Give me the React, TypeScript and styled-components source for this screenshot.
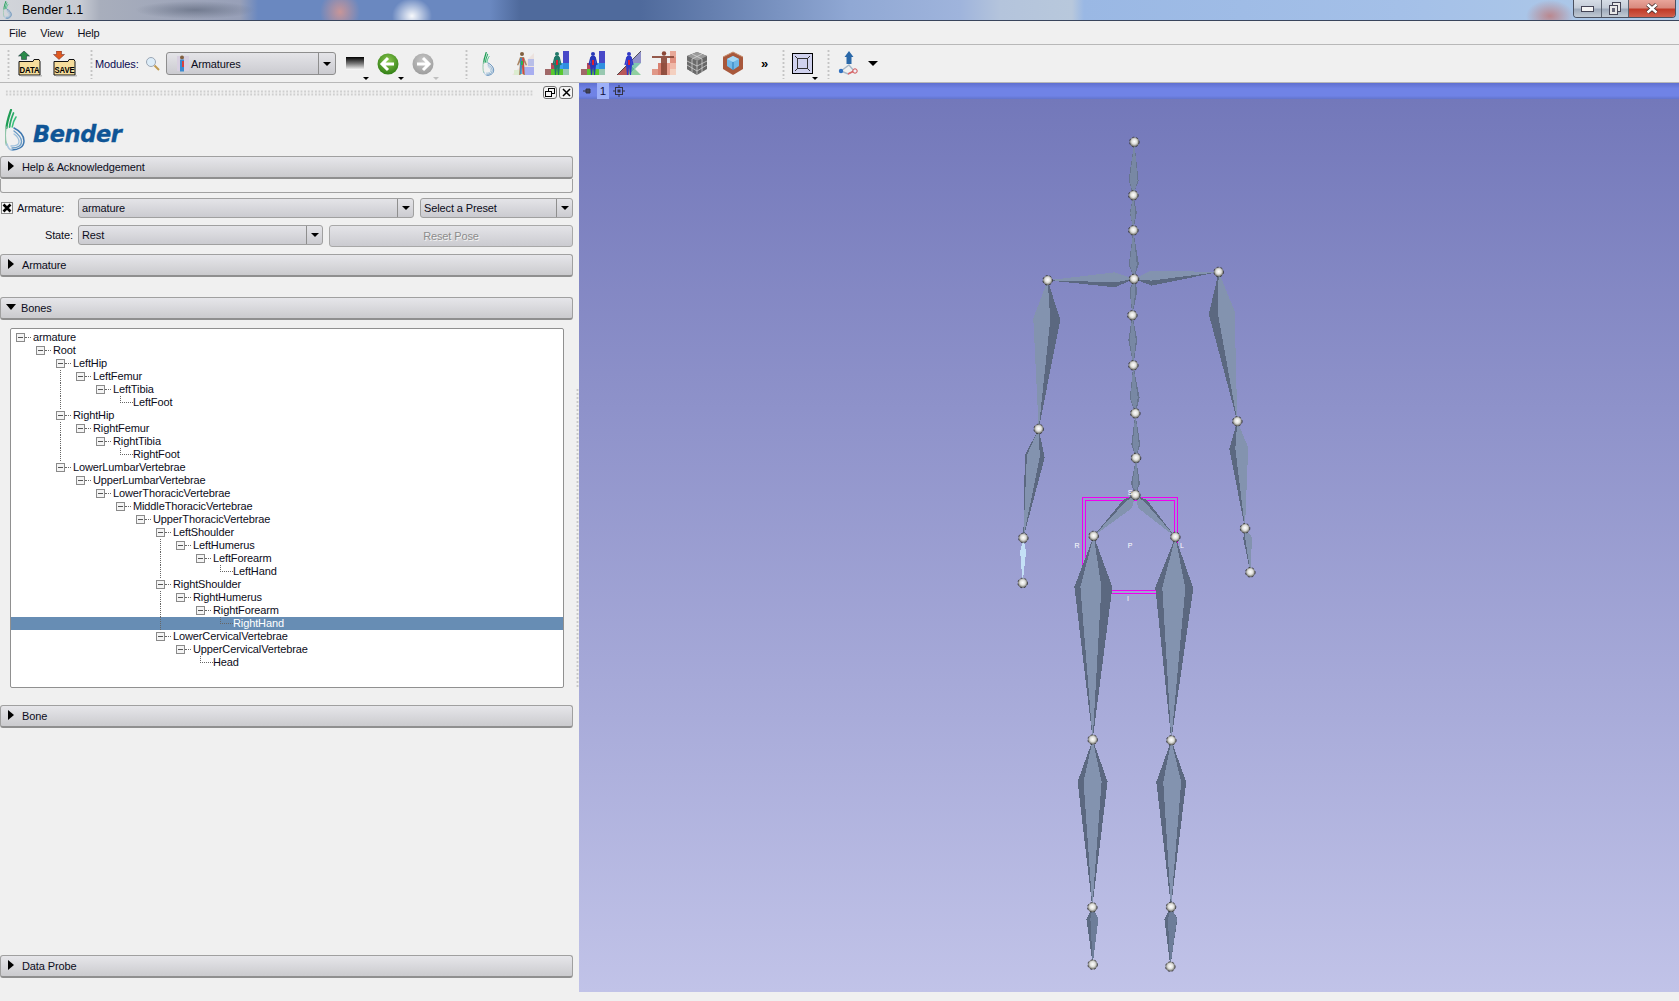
import React from "react";
import styled, { createGlobalStyle } from "styled-components";

const Global = createGlobalStyle`
  html, body { margin: 0; padding: 0; background: #f0f0f0; }
  body { font-family: "Liberation Sans", Arial, sans-serif; font-size: 11px; letter-spacing: -0.12px; color: #0c0c20; overflow: hidden; }
  #root { width: 1679px; height: 1001px; }
`;

const Frame = styled.div`
  width: 1679px; height: 1001px; display: flex; flex-direction: column; background: #f0f0f0; overflow: hidden;
`;

/* ---------- title bar ---------- */
const TitleBar = styled.div`
  height: 20px; flex: none; display: flex; align-items: center; justify-content: space-between;
  border-bottom: 1px solid #39455c;
  background:
    radial-gradient(ellipse 20px 22px at 340px 12px, rgba(205,150,150,.95), rgba(205,150,150,0)),
    radial-gradient(ellipse 20px 18px at 412px 16px, rgba(255,255,255,.95), rgba(255,255,255,0)),
    radial-gradient(ellipse 24px 16px at 1550px 16px, rgba(190,120,120,.8), rgba(190,120,120,0)),
    radial-gradient(ellipse 60px 9px at 195px 10px, rgba(80,90,110,.55), rgba(80,90,110,0)),
    linear-gradient(90deg, #d2d5da 0, #c8ccd4 80px, #a8aebc 100px, #98a0b8 240px, #6a88c0 258px, #6a88c0 490px, #4f6a9c 520px, #4f6a9c 640px, #90a8d4 850px, #9fb4dc 960px, #b4c4dc 1000px, #b8c8dc 1072px, #9ab8e4 1084px, #a4c0e8 1400px, #b0cbe8 100%);
`;
const TitleLeft = styled.div`
  display: flex; align-items: center; gap: 10px; padding-left: 3px; font-size: 12.5px; letter-spacing: 0; color: #000;
`;
const WinButtons = styled.div`
  display: flex; height: 17px; margin: 0 3px 3px 0; align-self: flex-start;
  border: 1px solid #4a5060; border-top: 0; border-radius: 0 0 4px 4px; overflow: hidden;
`;
const WinButton = styled.div<{ $w: number; $close?: boolean }>`
  width: ${(p) => p.$w}px; display: flex; align-items: center; justify-content: center;
  border-left: 1px solid #5a6270;
  &:first-child { border-left: 0; }
  background: ${(p) =>
    p.$close
      ? "linear-gradient(180deg,#e8a49a 0,#d98a7e 45%,#c03a28 55%,#d0604e 100%)"
      : "linear-gradient(180deg,#d6dde6 0,#c4ccd8 45%,#9eaabb 55%,#c2cad4 100%)"};
`;

/* ---------- menu ---------- */
const MenuBar = styled.div`
  height: 22px; padding: 1px 9px 0; flex: none; display: flex; align-items: center; gap: 14px;
  border-bottom: 1px solid #b8b8b8; color: #101020;
`;
const MenuItem = styled.span``;

/* ---------- tool bar ---------- */
const ToolBar = styled.div`
  height: 37px; flex: none; display: flex; align-items: center; border-bottom: 1px solid #b8b8b8;
`;
const Grip = styled.div<{ $ml: number }>`
  width: 3px; height: 30px; margin-left: ${(p) => p.$ml}px; flex: none;
  background-image: radial-gradient(circle, #c4c4c4 1px, transparent 1.2px);
  background-size: 3px 4px;
`;
const ToolSlot = styled.div<{ $ml: number; $w: number }>`
  width: ${(p) => p.$w}px; height: 26px; margin-left: ${(p) => p.$ml}px; flex: none; position: relative;
  display: flex; align-items: center; justify-content: center;
`;
const MenuCaret = styled.span<{ $c?: string }>`
  position: absolute; right: -5px; bottom: -3px; width: 0; height: 0;
  border-left: 3px solid transparent; border-right: 3px solid transparent; border-top: 3px solid ${(p) => p.$c || "#000"};
`;
const ModulesLabel = styled.span<{ $ml: number }>`
  margin-left: ${(p) => p.$ml}px; color: #0a0a50; flex: none; width: 49px;
`;
const ModuleCombo = styled.div`
  width: 170px; height: 23px; margin-left: 6px; flex: none; box-sizing: border-box; display: flex; align-items: center;
  border: 1px solid #8e8e8e; border-radius: 3px;
  background: linear-gradient(180deg,#e4e4e8,#cbcbd0);
`;
const ModuleComboLabel = styled.div`
  flex: 1; display: flex; align-items: center; gap: 2px; padding-left: 9px;
`;
const ComboArrowCell = styled.div<{ $w?: number }>`
  width: ${(p) => p.$w || 15}px; align-self: stretch; flex: none; display: flex; align-items: center; justify-content: center;
  border-left: 1px solid #8e8e8e;
`;
const DownTri = styled.span`
  width: 0; height: 0; border-left: 4px solid transparent; border-right: 4px solid transparent; border-top: 4px solid #000;
`;
const Chevrons = styled.span`
  margin-left: 16px; width: 10px; flex: none; font-size: 13px; font-weight: bold; color: #000; line-height: 1;
`;
const BigCaret = styled.span`
  margin-left: 5px; flex: none; width: 0; height: 0;
  border-left: 5.5px solid transparent; border-right: 5.5px solid transparent; border-top: 5.5px solid #000;
`;

/* ---------- main ---------- */
const Main = styled.div`
  flex: none; height: 909px; display: flex;
`;
const Side = styled.div`
  width: 573px; flex: none; display: flex; flex-direction: column;
`;
const Splitter = styled.div`
  width: 6px; flex: none; display: flex; align-items: center; justify-content: center;
`;
const SplitterDots = styled.div`
  width: 3px; height: 300px; margin-left: 2px;
  background-image: radial-gradient(circle, #c8c8c8 1px, transparent 1.2px);
  background-size: 3px 4px;
`;
const DockTitle = styled.div`
  height: 13px; margin-top: 3px; flex: none; display: flex; align-items: center; gap: 2px; padding-left: 5px;
`;
const DockDots = styled.div`
  flex: 1; height: 6px; margin-right: 7px;
  background-image: radial-gradient(circle, #cfcfcf 1px, transparent 1.2px);
  background-size: 3.6px 3px;
`;
const DockBtn = styled.div`
  width: 14px; height: 13px; box-sizing: border-box; display: flex; align-items: center; justify-content: center;
  border: 1px solid #707070; border-radius: 3px; background: #f4f4f4;
`;
const LogoRow = styled.div`
  height: 46px; margin-top: 6px; flex: none; display: flex; align-items: flex-end; padding-left: 5px; gap: 8px;
`;
const LogoText = styled.span`
  font-family: "DejaVu Sans", sans-serif; font-weight: bold; font-style: italic; font-size: 22.5px; letter-spacing: -0.4px;
  line-height: 30px; color: #0f5596; height: 32px; -webkit-text-stroke: .3px #0f5596;
`;
const Header = styled.div<{ $mt: number }>`
  height: 23px; flex: none; box-sizing: border-box; margin-top: ${(p) => p.$mt}px;
  display: flex; align-items: center; gap: 8px; padding-left: 7px;
  border: 1px solid #a0a0a0; border-bottom: 2px solid #8f8f8f; border-radius: 3px;
  background: linear-gradient(180deg,#e6e6ea,#cbcbce);
`;
const TriRight = styled.span`
  width: 0; height: 0; margin-top: -2px; border-top: 5px solid transparent; border-bottom: 5px solid transparent; border-left: 6px solid #000;
`;
const TriDown = styled.span`
  width: 0; height: 0; margin: -2px -3px 0 -2px; border-left: 5.5px solid transparent; border-right: 5.5px solid transparent; border-top: 6px solid #000;
`;
const EmptyBox = styled.div`
  height: 14px; flex: none; box-sizing: border-box; border: 1px solid #a0a0a0; border-top: 0; border-radius: 0 0 3px 3px;
`;
const FormRow = styled.div<{ $mt: number }>`
  display: flex; align-items: center; height: 20px; margin-top: ${(p) => p.$mt}px; flex: none;
`;
const Check = styled.div`
  width: 12px; height: 12px; margin-left: 1px; box-sizing: border-box; border: 1px solid #888; background: #f8f8f8;
  display: flex; align-items: center; justify-content: center;
`;
const FormLabel = styled.span<{ $w: number; $right?: boolean }>`
  width: ${(p) => p.$w}px; flex: none; box-sizing: border-box;
  text-align: ${(p) => (p.$right ? "right" : "left")};
  padding: ${(p) => (p.$right ? "0 5px 0 0" : "0 0 0 4px")};
`;
const Combo = styled.div<{ $w: number; $ml?: number }>`
  width: ${(p) => p.$w}px; margin-left: ${(p) => p.$ml || 0}px; height: 20px; flex: none; box-sizing: border-box;
  display: flex; align-items: center; border: 1px solid #a0a0a0; border-radius: 3px;
  background: linear-gradient(180deg,#e4e4e8,#cbcbd0);
`;
const ComboText = styled.span`
  flex: 1; padding-left: 3px;
`;
const DisabledButton = styled.div`
  flex: 1; margin: 1px 0 0 6px; height: 22px; box-sizing: border-box; display: flex; align-items: center; justify-content: center;
  border: 1px solid #a8a8a8; border-radius: 3px; background: linear-gradient(180deg,#e4e4e8,#cbcbd0);
  color: #8c8c8c; text-shadow: 1px 1px 0 #f4f4f4;
`;

const TreeBox = styled.div`
  margin: 8px 9px 0 10px; height: 360px; flex: none; box-sizing: border-box; padding-top: 2px;
  border: 1px solid #909090; border-radius: 2px; background: #fff;
`;
const TreeRow = styled.div<{ $sel?: boolean }>`
  height: 13px; display: flex; padding-left: 5px; line-height: 13px; white-space: nowrap;
  color: ${(p) => (p.$sel ? "#fff" : "#0c0c20")};
  background: ${(p) => (p.$sel ? "#678db4" : "transparent")};
`;
const Indent = styled.span<{ $line?: boolean }>`
  width: 20px; flex: none; box-sizing: border-box; height: 13px;
  &::before {
    content: ""; display: ${(p) => (p.$line ? "block" : "none")};
    width: 0; height: 13px; margin-left: 4px; border-left: 1px dotted #666;
  }
`;
const Expander = styled.span`
  width: 17px; flex: none; height: 13px; display: flex; align-items: center;
`;
const Minus = styled.span`
  width: 9px; height: 9px; box-sizing: border-box; flex: none; border: 1px solid #8a8a8a; display: flex; align-items: center; justify-content: center;
  background: #f4f4f4;
  &::before { content: ""; width: 5px; height: 1px; background: #555; }
`;
const HDots = styled.span`
  width: 6px; height: 0; flex: none; border-top: 1px dotted #666;
`;
const Leaf = styled.span`
  width: 13px; height: 7px; margin-left: 4px; align-self: flex-start; flex: none; box-sizing: border-box;
  border-left: 1px dotted #666; border-bottom: 1px dotted #666;
`;
const Spacer = styled.div`
  flex: 1;
`;
const BottomGap = styled.div`
  flex: none; height: 14px;
`;

/* ---------- viewport ---------- */
const View = styled.div`
  flex: 1; display: flex; flex-direction: column; height: 909px;
`;
const ViewStrip = styled.div`
  height: 16px; flex: none; display: flex; align-items: stretch; padding-left: 4px; gap: 4px;
  background: linear-gradient(180deg,#5f6fd0 0,#7083e6 35%,#7083e6 80%,#6274cc 100%);
`;
const StripIcon = styled.div<{ $w: number }>`
  width: ${(p) => p.$w}px; display: flex; align-items: center; justify-content: center;
`;
const StripNumber = styled.div`
  width: 12px; margin-left: 2px; display: flex; align-items: center; justify-content: center; background: #9db0f8; color: #101040; font-size: 11.5px;
`;
const Canvas = styled.svg`
  display: block; width: 1100px; height: 893px; flex: none;
`;

/* ---------- icons ---------- */
const Folder = ({ label, arrow, up }: { label: string; arrow: string; up?: boolean }) => (
  <svg width="24" height="26" viewBox="0 0 24 26">
    <path d="M1 10.5 H15 l1 -2 h5 l1 2 V24 H1Z" fill="#f6dd9c" stroke="#111" strokeWidth="1" />
    <rect x="3" y="24" width="21" height="1.5" fill="#999" opacity=".6" />
    <text x="11.5" y="21.5" textAnchor="middle" fontFamily="Liberation Sans" fontSize="8.5" fontWeight="bold" fill="#000" textLength="20" lengthAdjust="spacingAndGlyphs">{label}</text>
    {up ? (
      <path d="M6 0 L11.5 5 H8.5 V8.5 H3.5 V5 H0.5 Z" fill={arrow} stroke="#123" strokeWidth=".5" />
    ) : (
      <path d="M3.5 0 H8.5 V3.5 H11.5 L6 8.5 L0.5 3.5 H3.5 Z" fill={arrow} stroke="#622" strokeWidth=".5" />
    )}
  </svg>
);
const Magnifier = () => (
  <svg width="15" height="15" viewBox="0 0 15 15">
    <circle cx="6" cy="6" r="4.5" fill="#dcecf8" stroke="#9aa6b4" />
    <path d="M9.5 9.5 L14 14" stroke="#c09a50" strokeWidth="2" />
  </svg>
);
const Mark = ({ w = 20, h = 42 }: { w?: number; h?: number }) => (
  <svg width={w} height={h} viewBox="0 0 20 42" fill="none" strokeLinecap="round">
    <path d="M6 1 C4 7 2 12 1.5 19" stroke="#1f9d55" strokeWidth="2.2" />
    <path d="M8.5 4 C6.5 9 5 13 4.6 18" stroke="#2cab6a" strokeWidth="1.8" />
    <path d="M11 8 C9 11 7.8 14 7.2 18" stroke="#3cc07c" strokeWidth="1.6" />
    <path d="M1 18 C0 24 0 31 1.5 36" stroke="#8fc4a8" strokeWidth="1.6" />
    <path d="M9 19 C15 22 19 27 19 32 C19 38 13 41 7 41" stroke="#3f78b0" strokeWidth="1.5" />
    <path d="M9 22 C13 25 16.5 28 16.5 32.5 C16.5 37 12 39 7 39" stroke="#6b9cc6" strokeWidth="1.4" />
    <path d="M9 25 C12 27 14 30 14 33 C14 36 10 37 6 37" stroke="#9dbfdb" strokeWidth="1.3" />
    <path d="M2 35 C3 39 5 41 7 41" stroke="#a9c6de" strokeWidth="1.6" />
  </svg>
);
const Gradient = () => (
  <svg width="18" height="13" viewBox="0 0 18 13">
    <defs>
      <linearGradient id="tg" x1="0" y1="0" x2="0" y2="1">
        <stop offset="0" stopColor="#000" /><stop offset=".5" stopColor="#777" /><stop offset="1" stopColor="#fff" />
      </linearGradient>
    </defs>
    <rect width="18" height="13" fill="url(#tg)" />
  </svg>
);
const NavArrow = ({ back, c1, c2 }: { back?: boolean; c1: string; c2: string }) => (
  <svg width="22" height="22" viewBox="0 0 22 22">
    <defs>
      <radialGradient id={`n${c1.slice(1)}`} cx=".5" cy=".35" r=".7">
        <stop offset="0" stopColor={c1} /><stop offset="1" stopColor={c2} />
      </radialGradient>
    </defs>
    <circle cx="11" cy="11" r="10.5" fill={`url(#n${c1.slice(1)})`} />
    <path d={back ? "M11 5 L5 11 L11 17 M5 11 H17" : "M11 5 L17 11 L11 17 M17 11 H5"} fill="none" stroke="#fff" strokeWidth="3" />
  </svg>
);
const Figure = ({ x = 12, c = "#3544b8" }: { x?: number; c?: string }) => (
  <g>
    <circle cx={x} cy="3" r="2" fill={c} />
    <path d={`M${x - 2} 5 h4 l1 9 l-1 10 h-1 l-1 -8 l-1 8 h-1 l-1 -10z`} fill={c} />
    <path d={`M${x - 2} 6 l-2 8 M${x + 2} 6 l2 8`} stroke={c} strokeWidth="1.4" />
    <rect x={x - 1} y="9" width="2" height="5" fill="#e02030" />
  </g>
);
const Ico = ({ children, w = 24 }: { children: React.ReactNode; w?: number }) => (
  <svg width={w} height="25" viewBox="0 0 24 25">{children}</svg>
);
const Tile = ({ x, y, w, h, c }: { x: number; y: number; w: number; h: number; c: string }) => (
  <rect x={x} y={y} width={w} height={h} fill={c} />
);
const IconBody = () => (
  <Ico>
    <path d="M1 24 L23 2 V24Z" fill="#ece2de" />
    <rect x="17" y="8" width="6" height="7" fill="#b8bee8" />
    <rect x="13" y="16" width="10" height="8" fill="#a8aef0" />
    <rect x="3" y="19" width="9" height="5" fill="#dcecd0" />
    <circle cx="11" cy="3" r="2" fill="#806040" />
    <path d="M9 6 h4 l3 8 l-1.2 .4 l-1.8 -3.5 l1 13 h-1.6 l-1.4 -8 l-1.4 8 h-1.6 l1 -13 l-1.8 3.5 l-1.2 -.4z" fill="#a88462" />
    <rect x="9.2" y="7" width="1.5" height="16" fill="#2a8ad0" />
    <rect x="11.4" y="7" width="1.5" height="16" fill="#d84040" />
    <rect x="10" y="10" width="2" height="4" fill="#30b050" />
  </Ico>
);
const IconBars = ({ c = "#d01818" }: { c?: string }) => (
  <Ico>
    <Tile x={18} y={0} w={6} h={12} c="#4848c8" />
    <Tile x={18} y={12} w={6} h={6} c="#3090e0" />
    <Tile x={18} y={18} w={6} h={6} c="#98c8b0" />
    <Tile x={12} y={12} w={6} h={6} c="#40a0f0" />
    <Tile x={12} y={18} w={6} h={6} c="#58c830" />
    <Tile x={6} y={18} w={6} h={6} c="#58c830" />
    <Tile x={0} y={18} w={6} h={6} c="#a06868" />
    <Tile x={6} y={12} w={6} h={6} c="#b84858" />
    <Figure x={12} c={c === "#d01818" ? "#207868" : "#2838b8"} />
  </Ico>
);
const IconTangram = () => (
  <Ico>
    <path d="M12 12 L24 0 V12Z" fill="#9090c8" />
    <path d="M12 12 H24 L18 18Z" fill="#80c8b0" />
    <path d="M12 24 L18 18 L24 24Z" fill="#90d0a0" />
    <path d="M12 12 L18 18 L12 24Z" fill="#60b898" />
    <path d="M0 24 L12 12 V24Z" fill="#b85858" />
    <path d="M0 24 L24 0" stroke="#222" strokeWidth=".7" />
    <Figure x={12} c="#3038c8" />
  </Ico>
);
const IconTorso = () => (
  <Ico>
    <Tile x={18} y={0} w={6} h={6} c="#e8a898" />
    <Tile x={18} y={6} w={6} h={6} c="#e09080" />
    <Tile x={18} y={12} w={6} h={6} c="#f0b8a8" />
    <Tile x={18} y={18} w={6} h={6} c="#f4d0c0" />
    <Tile x={12} y={12} w={6} h={12} c="#e8a090" />
    <Tile x={6} y={12} w={6} h={12} c="#d88070" />
    <Tile x={0} y={18} w={6} h={6} c="#e09888" />
    <path d="M0 5 H22 V7 H15 L15 24 H9 V7 H0Z" fill="#8a4838" opacity=".9" />
    <circle cx="12" cy="2.5" r="2.2" fill="#8a4838" />
  </Ico>
);
const IconGrid = () => (
  <Ico>
    <path d="M12 1 L22 5 V18 L12 24 L2 18 V5Z" fill="#666" />
    <path d="M12 1 L22 5 L12 10 L2 5Z" fill="#9a9a9a" />
    <path d="M2 5 L12 10 V24 L2 18Z" fill="#6a6a6a" />
    <path d="M7 3 L17 8 M17 3 L7 8 M12 10 V24 M7 8 V21 M17 8 V21 M2 10 L12 15 L22 10 M2 14 L12 20 L22 14" stroke="#ddd" strokeWidth=".7" fill="none" />
  </Ico>
);
const IconVol = () => (
  <Ico>
    <path d="M12 1 L22 6 V18 L12 24 L2 18 V6Z" fill="#a8583c" />
    <path d="M12 5 L18 8 V15 L12 19 L6 15 V8Z" fill="#70b8e8" />
    <path d="M12 5 L18 8 L12 11 L6 8Z" fill="#a8d8f4" />
    <path d="M12 11 V19" stroke="#2878b8" />
    <path d="M2 6 L12 1 L22 6" stroke="#c89070" fill="none" />
  </Ico>
);
const IconFrame = () => (
  <svg width="21" height="21" viewBox="0 0 21 21">
    <rect x=".5" y=".5" width="20" height="20" fill="#d0d2ee" stroke="#000" />
    <rect x="5.5" y="5.5" width="10" height="10" fill="none" stroke="#333" />
    <path d="M3 3 L6 6 M18 3 L15 6 M3 18 L6 15 M18 18 L15 15" stroke="#333" />
  </svg>
);
const IconWidget = () => (
  <svg width="25" height="25" viewBox="0 0 25 25">
    <path d="M11 0 L15.5 6 H13.5 V13 H8.5 V6 H6.5Z" fill="#2a68a8" />
    <path d="M3 20 L11 14 L16 20 L10 23Z" fill="none" stroke="#a8b8c8" strokeWidth="1.4" />
    <path d="M10 23 L16 20" stroke="#e06868" strokeWidth="1.4" />
    <circle cx="3" cy="20" r="2.2" fill="#3070c0" />
    <circle cx="17" cy="20" r="2.2" fill="#f0f0f8" stroke="#d05050" />
  </svg>
);

/* ---------- tree data ---------- */
const rows: [number, string, boolean?][] = [
  [0, "armature"], [1, "Root"], [2, "LeftHip"], [3, "LeftFemur"], [4, "LeftTibia"], [5, "LeftFoot", true],
  [2, "RightHip"], [3, "RightFemur"], [4, "RightTibia"], [5, "RightFoot", true],
  [2, "LowerLumbarVertebrae"], [3, "UpperLumbarVertebrae"], [4, "LowerThoracicVertebrae"], [5, "MiddleThoracicVertebrae"],
  [6, "UpperThoracicVertebrae"], [7, "LeftShoulder"], [8, "LeftHumerus"], [9, "LeftForearm"], [10, "LeftHand", true],
  [7, "RightShoulder"], [8, "RightHumerus"], [9, "RightForearm"], [10, "RightHand", true],
  [7, "LowerCervicalVertebrae"], [8, "UpperCervicalVertebrae"], [9, "Head", true],
];
const hasGuide = (i: number, k: number) => {
  for (let j = i + 1; j < rows.length; j++) {
    if (rows[j][0] < k) return false;
    if (rows[j][0] === k) return true;
  }
  return false;
};

/* ---------- skeleton ---------- */
type P = [number, number];
const z5 = (x: number, y: number): P => [1000 + x / 3, 120 + y / 3];
const z6 = (x: number, y: number): P => [1000 + x / 3, 470 + y / 3];
const J = {
  head: z5(403, 66), h2: z5(400, 226), h3: z5(400, 331), neck: z5(402, 477), s1: z5(397, 586), s2: z5(400, 736),
  s3: z5(406, 880), s4: z5(408, 1014), pelvis: z5(406, 1125), ls: z5(143, 481), rs: z5(656, 456), le: z5(116, 927),
  re: z5(712, 904), lw: z5(70, 1254), rw: z5(735, 1225), lh: z5(68, 1389), rh: z5(751, 1357), lhip: z5(281, 1248),
  rhip: z5(526, 1251), lk: z6(278, 809), rk: z6(514, 811), la: z6(277, 1312), ra: z6(513, 1311), lt: z6(278, 1484), rt: z6(511, 1490),
};
const bones: { a: P; b: P; f: number; l: number; r: number; il?: number; ir?: number; c?: string; d?: string }[] = [
  { a: J.head, b: J.h2, f: 0.72, l: 5, r: 5, il: 4, ir: 4, c: "#7888a4", d: "#66748e" },
  { a: J.h2, b: J.h3, f: 0.5, l: 3.5, r: 3.5, il: 3, ir: 2, c: "#7888a4", d: "#66748e" },
  { a: J.h3, b: J.neck, f: 0.7, l: 5, r: 5, il: 4, ir: 3, c: "#7888a4", d: "#66748e" },
  { a: J.neck, b: J.s1, f: 0.3, l: 4, r: 4, il: 3, ir: 2, c: "#7888a4", d: "#66748e" },
  { a: J.s1, b: J.s2, f: 0.5, l: 4.5, r: 4.5, il: 3, ir: 3, c: "#7888a4", d: "#66748e" },
  { a: J.s2, b: J.s3, f: 0.68, l: 5, r: 5, il: 4, ir: 3, c: "#7888a4", d: "#66748e" },
  { a: J.s3, b: J.s4, f: 0.7, l: 4.5, r: 4.5, il: 3, ir: 3, c: "#7888a4", d: "#66748e" },
  { a: J.s4, b: J.pelvis, f: 0.7, l: 4.5, r: 4.5, il: 3, ir: 3, c: "#7888a4", d: "#66748e" },
  { a: J.neck, b: J.ls, f: 0.22, l: 7, r: 8, il: 7, ir: 3 },
  { a: J.neck, b: J.rs, f: 0.2, l: 8, r: 7, il: 3, ir: 7 },
  { a: J.ls, b: J.le, f: 0.26, l: 12, r: 15, il: 12, ir: 5 },
  { a: J.rs, b: J.re, f: 0.27, l: 15, r: 11, il: 6, ir: 11 },
  { a: J.le, b: J.lw, f: 0.25, l: 10, r: 10, il: 8, ir: 5 },
  { a: J.re, b: J.rw, f: 0.25, l: 10, r: 9, il: 4, ir: 9 },
  { a: J.lw, b: J.lh, f: 0.3, l: 3, r: 3, il: 3, ir: 3, c: "#c4e0f6", d: "#c4e0f6" },
  { a: J.rw, b: J.rh, f: 0.22, l: 3, r: 6, il: 1, ir: 6 },
  { a: J.pelvis, b: J.lhip, f: 0.2, l: 5, r: 7, il: 2, ir: 7 },
  { a: J.pelvis, b: J.rhip, f: 0.2, l: 7, r: 5, il: 7, ir: 2 },
  { a: J.lhip, b: J.lk, f: 0.25, l: 19, r: 19, il: 13, ir: 8 },
  { a: J.rhip, b: J.rk, f: 0.25, l: 19, r: 19, il: 12, ir: 11 },
  { a: J.lk, b: J.la, f: 0.25, l: 15, r: 15, il: 9, ir: 9 },
  { a: J.rk, b: J.ra, f: 0.25, l: 15, r: 15, il: 8, ir: 10 },
  { a: J.la, b: J.lt, f: 0.2, l: 6, r: 6, il: 2, ir: 6, c: "#6d7d99", d: "#5c6a82" },
  { a: J.ra, b: J.rt, f: 0.2, l: 6.5, r: 6.5, il: 3, ir: 6, c: "#6d7d99", d: "#5c6a82" },
];
const kite = (a: P, b: P, f: number, l: number, r: number) => {
  const dx = b[0] - a[0], dy = b[1] - a[1], L = Math.hypot(dx, dy);
  const nx = dy / L, ny = -dx / L;
  const m: P = [a[0] + dx * f, a[1] + dy * f];
  return [a, [m[0] + nx * r, m[1] + ny * r], b, [m[0] - nx * l, m[1] - ny * l]].map((p) => `${p[0].toFixed(1)},${p[1].toFixed(1)}`).join(" ");
};

const Skeleton = () => (
  <Canvas viewBox="579 99 1100 893" shapeRendering="crispEdges">
    <defs>
      <linearGradient id="bg" x1="0" y1="0" x2="0" y2="1">
        <stop offset="0" stopColor="#7378ba" /><stop offset="1" stopColor="#c1c3e8" />
      </linearGradient>
      <radialGradient id="ball" cx=".5" cy=".45" r=".55">
        <stop offset="0" stopColor="#ffffff" /><stop offset=".5" stopColor="#dededa" /><stop offset="1" stopColor="#5e5e58" />
      </radialGradient>
    </defs>
    <rect x="579" y="99" width="1100" height="893" fill="url(#bg)" />
    <rect x="1082.5" y="497.5" width="95" height="96" fill="none" stroke="#f000f0" />
    <rect x="1085.5" y="500.5" width="89" height="90" fill="none" stroke="#f000f0" />
    {bones.map((b, i) => (
      <g key={i}>
        <polygon points={kite(b.a, b.b, b.f, b.l, b.r)} fill={b.d || "#5b6880"} />
        <polygon points={kite(b.a, b.b, b.f, b.il ?? b.l * 0.65, b.ir ?? b.r * 0.65)} fill={b.c || "#8393af"} />
      </g>
    ))}
    {Object.entries(J).map(([k, p]) => (
      <circle key={k} cx={p[0]} cy={p[1]} r="4.8" fill="url(#ball)" stroke="#222" strokeWidth=".7" strokeDasharray="2 2" shapeRendering="auto" />
    ))}
    <g fontFamily="Liberation Sans" fontSize="7" fill="#fff" textAnchor="middle" shapeRendering="auto">
      <text x="1077" y="548">R</text>
      <text x="1130" y="548">P</text>
      <text x="1182" y="548">L</text>
      <text x="1128" y="601">I</text>
      <text x="1130" y="495">S</text>
    </g>
  </Canvas>
);

const Section = ({ title, mt, open }: { title: string; mt: number; open?: boolean }) => (
  <Header $mt={mt}>
    {open ? <TriDown /> : <TriRight />}
    <span>{title}</span>
  </Header>
);

export default function App() {
  return (
    <Frame>
      <Global />
      <TitleBar>
        <TitleLeft>
          <Mark w={9} h={18} />
          <span>Bender 1.1</span>
        </TitleLeft>
        <WinButtons>
          <WinButton $w={27}>
            <svg width="13" height="6"><rect x=".5" y=".5" width="12" height="5" fill="#f4f4f4" stroke="#445" /></svg>
          </WinButton>
          <WinButton $w={26}>
            <svg width="12" height="13"><rect x="3.5" y=".5" width="8" height="9" fill="#e8e8e8" stroke="#445" /><rect x=".5" y="3.5" width="8" height="9" fill="#e8e8e8" stroke="#445" /><rect x="3" y="6" width="3" height="4" fill="#667" /></svg>
          </WinButton>
          <WinButton $w={46} $close>
            <svg width="12" height="11"><path d="M1.5 1.5 L10.5 9.5 M10.5 1.5 L1.5 9.5" stroke="#3a2a2a" strokeWidth="4" /><path d="M1.5 1.5 L10.5 9.5 M10.5 1.5 L1.5 9.5" stroke="#fff" strokeWidth="2.4" /></svg>
          </WinButton>
        </WinButtons>
      </TitleBar>
      <MenuBar>
        <MenuItem>File</MenuItem>
        <MenuItem>View</MenuItem>
        <MenuItem>Help</MenuItem>
      </MenuBar>
      <ToolBar>
        <Grip $ml={7} />
        <ToolSlot $ml={8} $w={24}><Folder label="DATA" arrow="#2a8a4a" up /></ToolSlot>
        <ToolSlot $ml={11} $w={24}><Folder label="SAVE" arrow="#e05a20" /></ToolSlot>
        <Grip $ml={13} />
        <ModulesLabel $ml={2}>Modules:</ModulesLabel>
        <ToolSlot $ml={1} $w={15}><Magnifier /></ToolSlot>
        <ModuleCombo>
          <ModuleComboLabel>
            <svg width="13" height="17" viewBox="0 0 13 17">
              <rect x="1" y="1" width="12" height="15" fill="#d8d0e0" />
              <circle cx="6" cy="2.5" r="2" fill="#806040" />
              <rect x="4" y="4.5" width="4" height="12" fill="#3a8ad0" />
              <rect x="6" y="6" width="2" height="6" fill="#d84040" />
            </svg>
            <span>Armatures</span>
          </ModuleComboLabel>
          <ComboArrowCell $w={16}><DownTri /></ComboArrowCell>
        </ModuleCombo>
        <ToolSlot $ml={10} $w={18}><Gradient /><MenuCaret /></ToolSlot>
        <ToolSlot $ml={13} $w={22}><NavArrow back c1="#8cc850" c2="#2a7a10" /><MenuCaret /></ToolSlot>
        <ToolSlot $ml={13} $w={22}><NavArrow c1="#c8c8c8" c2="#9a9a9a" /><MenuCaret $c="#c0c0c0" /></ToolSlot>
        <Grip $ml={31} />
        <ToolSlot $ml={14} $w={13}><Mark w={13} h={24} /></ToolSlot>
        <ToolSlot $ml={16} $w={24}><IconBody /></ToolSlot>
        <ToolSlot $ml={10} $w={24}><IconBars /></ToolSlot>
        <ToolSlot $ml={12} $w={24}><IconBars c="#2030c0" /></ToolSlot>
        <ToolSlot $ml={12} $w={24}><IconTangram /></ToolSlot>
        <ToolSlot $ml={11} $w={24}><IconTorso /></ToolSlot>
        <ToolSlot $ml={9} $w={24}><IconGrid /></ToolSlot>
        <ToolSlot $ml={12} $w={24}><IconVol /></ToolSlot>
        <Chevrons>»</Chevrons>
        <Grip $ml={11} />
        <ToolSlot $ml={7} $w={21}><IconFrame /><MenuCaret /></ToolSlot>
        <Grip $ml={14} />
        <ToolSlot $ml={8} $w={25}><IconWidget /></ToolSlot>
        <BigCaret />
      </ToolBar>
      <Main>
        <Side>
          <DockTitle>
            <DockDots />
            <DockBtn>
              <svg width="10" height="9"><rect x="3.5" y=".5" width="6" height="5" fill="none" stroke="#000" /><rect x=".5" y="3.5" width="6" height="5" fill="#f4f4f4" stroke="#000" /></svg>
            </DockBtn>
            <DockBtn>
              <svg width="9" height="9"><path d="M1 1 L8 8 M8 1 L1 8" stroke="#000" strokeWidth="1.5" /></svg>
            </DockBtn>
          </DockTitle>
          <LogoRow>
            <Mark />
            <LogoText>Bender</LogoText>
          </LogoRow>
          <Section title="Help & Acknowledgement" mt={5} />
          <EmptyBox />
          <FormRow $mt={5}>
            <Check>
              <svg width="10" height="10"><path d="M1.5 1.5 L8.5 8.5 M8.5 1.5 L1.5 8.5" stroke="#000" strokeWidth="2.6" /></svg>
            </Check>
            <FormLabel $w={65}>Armature:</FormLabel>
            <Combo $w={336}>
              <ComboText>armature</ComboText>
              <ComboArrowCell $w={15}><DownTri /></ComboArrowCell>
            </Combo>
            <Combo $w={153} $ml={6}>
              <ComboText>Select a Preset</ComboText>
              <ComboArrowCell $w={15}><DownTri /></ComboArrowCell>
            </Combo>
          </FormRow>
          <FormRow $mt={7}>
            <FormLabel $w={78} $right>State:</FormLabel>
            <Combo $w={245}>
              <ComboText>Rest</ComboText>
              <ComboArrowCell $w={15}><DownTri /></ComboArrowCell>
            </Combo>
            <DisabledButton>Reset Pose</DisabledButton>
          </FormRow>
          <Section title="Armature" mt={9} />
          <Section title="Bones" mt={20} open />
          <TreeBox>
            {rows.map(([d, name, leaf], i) => (
              <TreeRow key={name} $sel={name === "RightHand"}>
                {Array.from({ length: d }).map((_, k) => (
                  <Indent key={k} $line={hasGuide(i, k)} />
                ))}
                {leaf ? (
                  <Expander><Leaf /></Expander>
                ) : (
                  <Expander><Minus /><HDots /></Expander>
                )}
                <span>{name}</span>
              </TreeRow>
            ))}
          </TreeBox>
          <Section title="Bone" mt={17} />
          <Spacer />
          <Section title="Data Probe" mt={0} />
          <BottomGap />
        </Side>
        <Splitter><SplitterDots /></Splitter>
        <View>
          <ViewStrip>
            <StripIcon $w={8}>
              <svg width="8" height="6"><path d="M0 3 H3 M3 1 V5 H7 V1 Z" stroke="#334" fill="#445" /></svg>
            </StripIcon>
            <StripNumber>1</StripNumber>
            <StripIcon $w={12}>
              <svg width="12" height="12"><rect x="2.5" y="2.5" width="7" height="7" fill="none" stroke="#334" /><rect x="4.5" y="4.5" width="3" height="3" fill="#334" /><path d="M6 0 V2 M6 10 V12 M0 6 H2 M10 6 H12" stroke="#334" /></svg>
            </StripIcon>
          </ViewStrip>
          <Skeleton />
        </View>
      </Main>
    </Frame>
  );
}
